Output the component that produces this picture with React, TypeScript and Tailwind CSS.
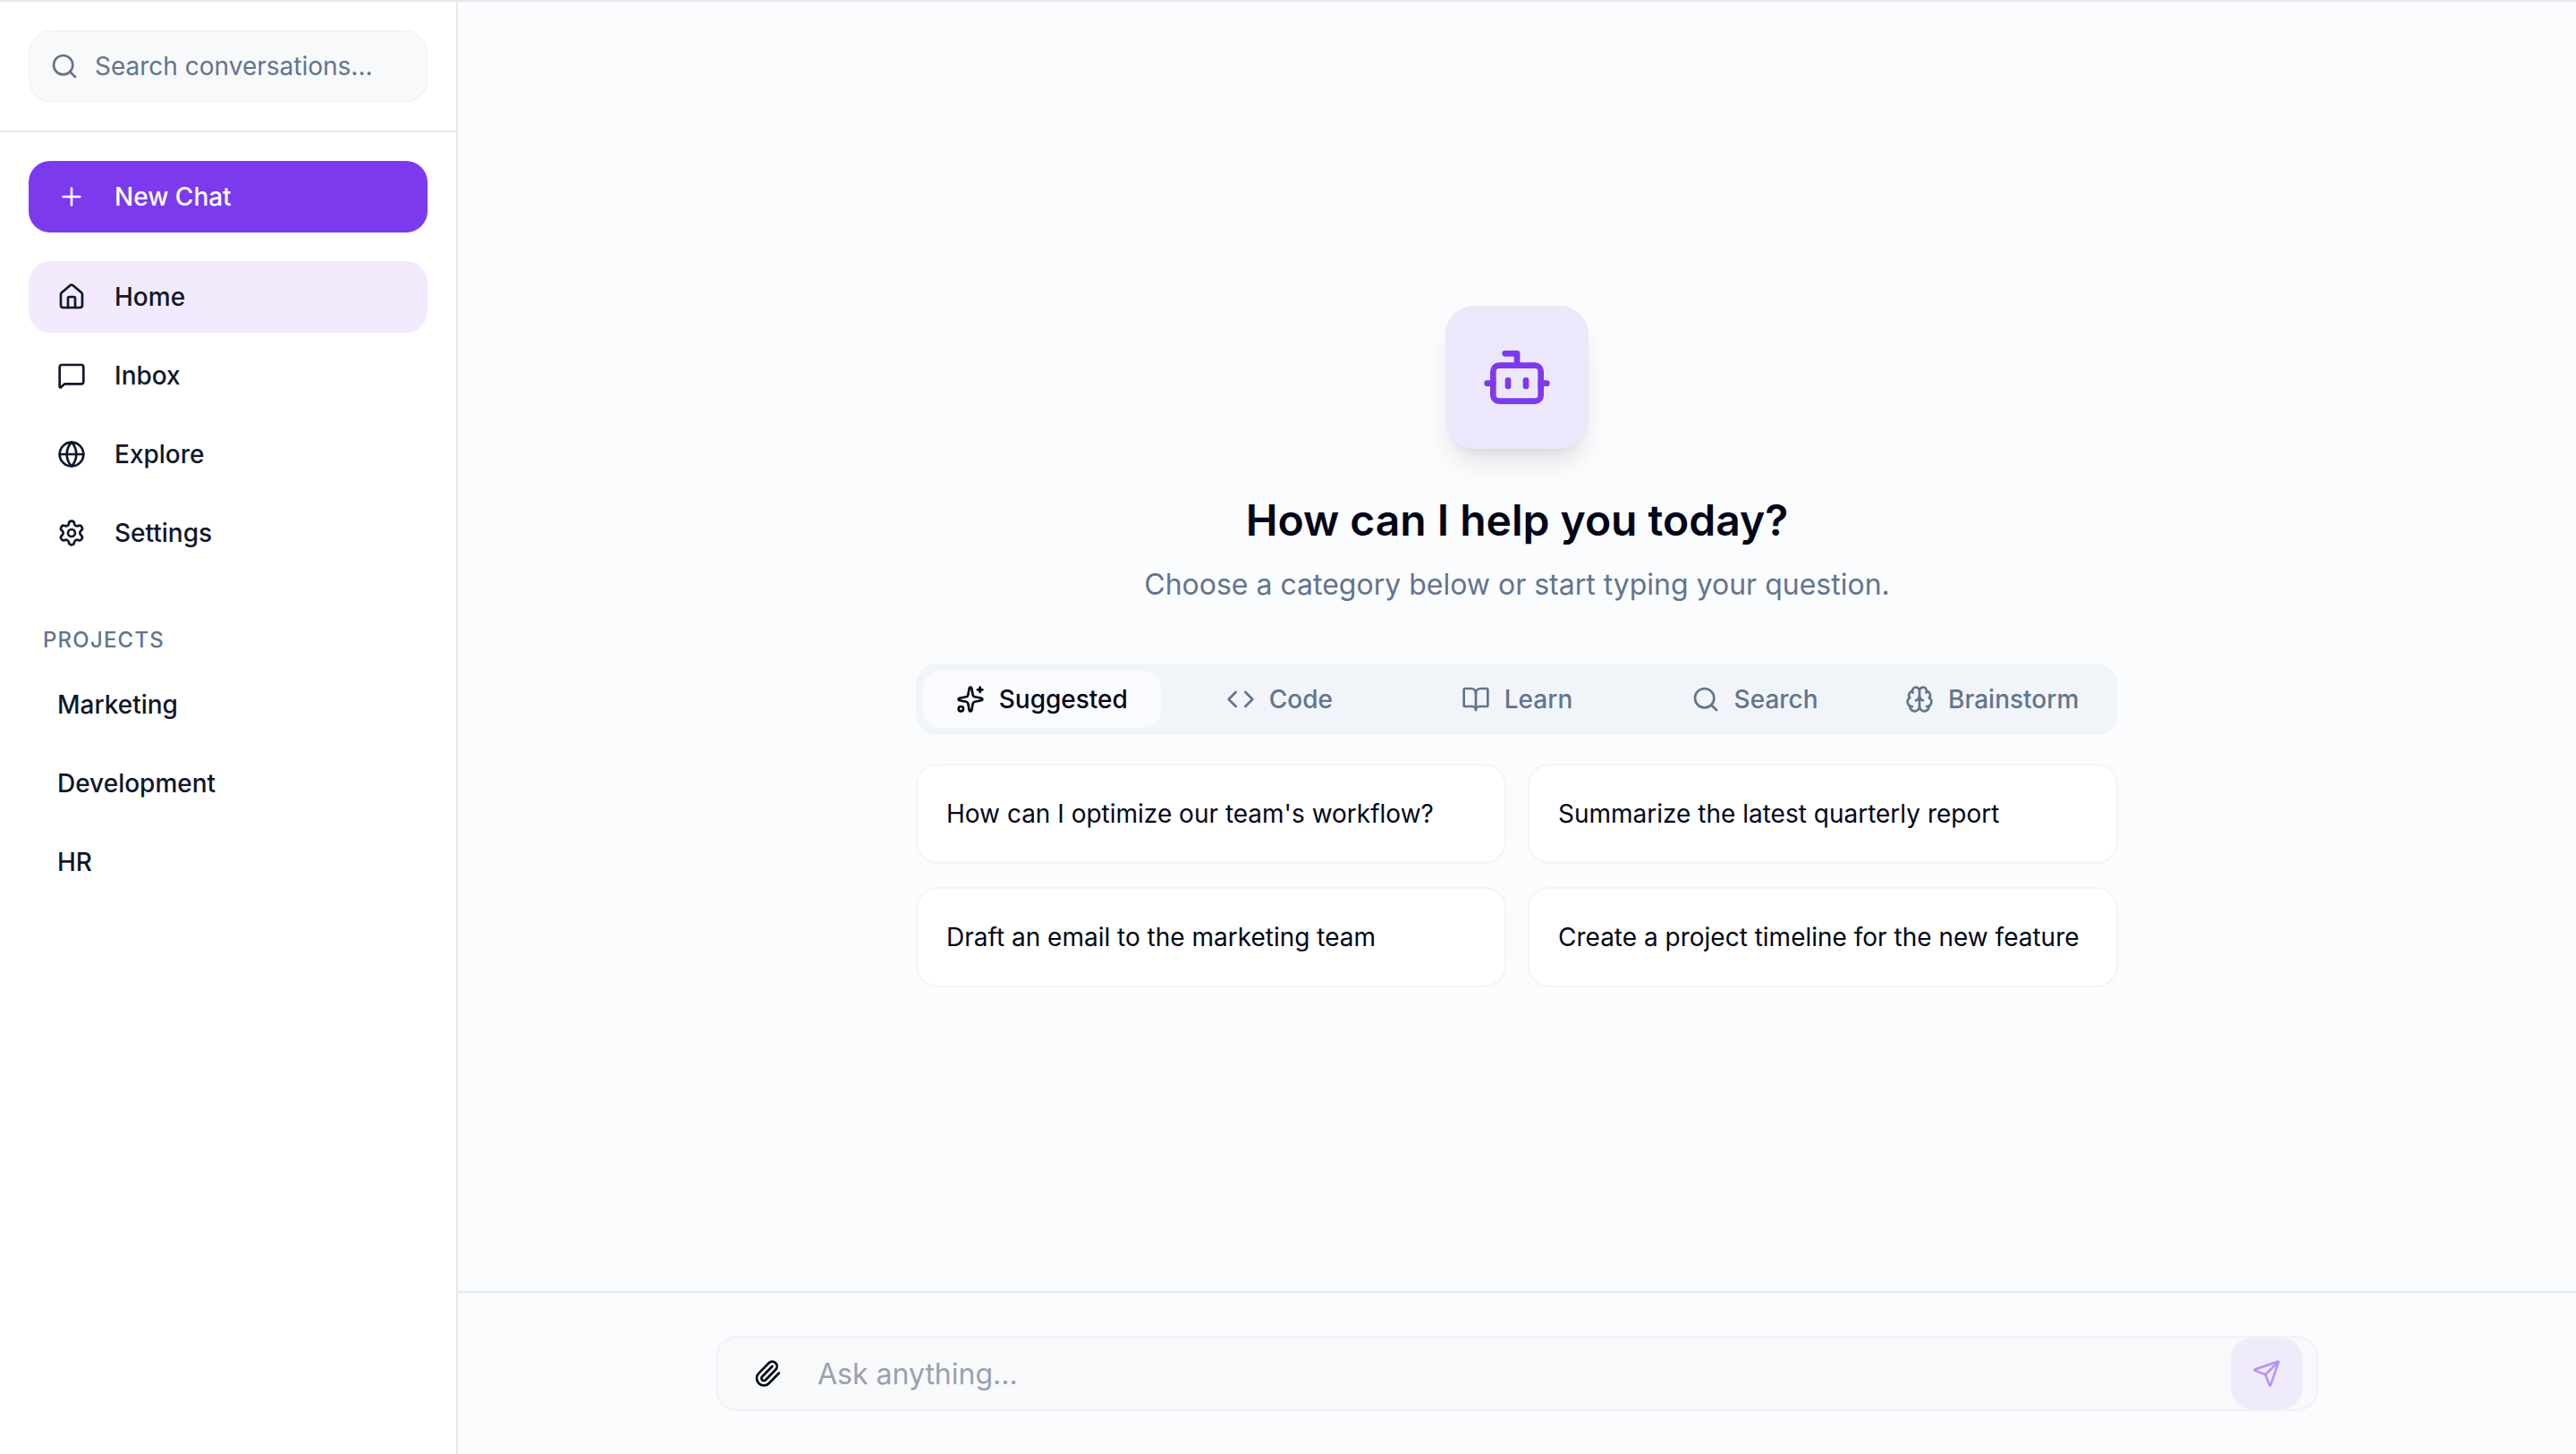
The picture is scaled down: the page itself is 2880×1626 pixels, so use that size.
import React from "react";
import {
  BookOpen,
  Bot,
  Brain,
  Code,
  Globe,
  House,
  MessageSquare,
  Paperclip,
  Plus,
  Search,
  Send,
  Settings,
  Sparkles,
} from "lucide-react";

const navItems = [
  { label: "Home", icon: House, active: true },
  { label: "Inbox", icon: MessageSquare },
  { label: "Explore", icon: Globe },
  { label: "Settings", icon: Settings },
];

const projects = ["Marketing", "Development", "HR"];

const tabs = [
  { label: "Suggested", icon: Sparkles, active: true },
  { label: "Code", icon: Code },
  { label: "Learn", icon: BookOpen },
  { label: "Search", icon: Search },
  { label: "Brainstorm", icon: Brain },
];

const prompts = [
  "How can I optimize our team's workflow?",
  "Summarize the latest quarterly report",
  "Draft an email to the marketing team",
  "Create a project timeline for the new feature",
];

const Sidebar: React.FC = () => {
  return (
    <aside className="flex w-[512px] shrink-0 flex-col border-r-2 border-slate-200 bg-white">
      <div className="border-b-2 border-slate-200 p-8">
        <div className="flex h-20 items-center gap-[18px] rounded-3xl border-2 border-slate-100 bg-[#f8f9fb] px-[22px]">
          <Search className="size-8 shrink-0 text-slate-500" />
          <input
            className="w-full bg-transparent text-[28px] text-slate-900 outline-none placeholder:text-slate-500"
            placeholder="Search conversations..."
          />
        </div>
      </div>
      <nav className="flex flex-col gap-2 p-8">
        <button className="mb-6 flex h-20 items-center gap-8 rounded-3xl bg-[#7c3aed] px-8 text-[28px] font-medium text-white">
          <Plus className="size-8" />
          New Chat
        </button>
        {navItems.map((item) => (
          <a
            key={item.label}
            href="#"
            className={`flex h-20 items-center gap-8 rounded-3xl px-8 text-[28px] font-medium text-slate-900 ${
              item.active ? "bg-[#f3eafd]" : ""
            }`}
          >
            <item.icon className="size-8" />
            {item.label}
          </a>
        ))}
        <div className="mt-14 mb-2 px-4 text-2xl leading-8 font-medium tracking-wider text-slate-500 uppercase">
          Projects
        </div>
        {projects.map((name) => (
          <a
            key={name}
            href="#"
            className="flex h-20 items-center rounded-3xl px-8 text-[28px] font-medium text-slate-900"
          >
            {name}
          </a>
        ))}
      </nav>
    </aside>
  );
};

const App: React.FC = () => {
  return (
    <div className="flex h-screen border-t-2 border-gray-200 font-['Inter',sans-serif]">
      <Sidebar />
      <main className="flex min-w-0 flex-1 flex-col bg-[#fbfcfe]">
        <div className="flex flex-1 flex-col items-center justify-center">
          <div className="flex size-40 items-center justify-center rounded-[32px] bg-[#ede7fb] shadow-[0_20px_30px_-6px_rgba(0,0,0,0.1),0_8px_12px_-8px_rgba(0,0,0,0.1)]">
            <Bot className="size-20 text-[#7c3aed]" />
          </div>
          <h1 className="mt-12 text-5xl leading-[64px] font-semibold text-slate-950">
            How can I help you today?
          </h1>
          <p className="mt-4 text-[32px] leading-12 text-slate-500">
            Choose a category below or start typing your question.
          </p>
          <div className="mt-16 w-[1344px]">
            <div className="grid h-20 grid-cols-5 rounded-3xl bg-slate-100 p-2">
              {tabs.map((tab) => (
                <button
                  key={tab.label}
                  className={`flex items-center justify-center gap-4 rounded-[20px] text-[28px] font-medium ${
                    tab.active ? "bg-[#fafbfe] text-slate-950" : "text-slate-500"
                  }`}
                >
                  <tab.icon className="size-8" />
                  {tab.label}
                </button>
              ))}
            </div>
            <div className="mt-8 grid grid-cols-2 gap-x-6 gap-y-[26px]">
              {prompts.map((text) => (
                <button
                  key={text}
                  className="flex h-28 items-center rounded-3xl border-2 border-slate-100 bg-white px-8 text-left text-[28px] text-slate-950"
                >
                  {text}
                </button>
              ))}
            </div>
          </div>
        </div>
        <footer className="border-t-2 border-slate-200 py-12">
          <div className="mx-auto flex h-[84px] w-[1792px] items-center rounded-3xl border-2 border-[#f1f2f7] bg-[#f8f9fb] pr-4 pl-10">
            <Paperclip className="size-8 shrink-0 text-slate-950" />
            <input
              className="ml-10 flex-1 bg-transparent pt-0.5 text-[32px] text-slate-900 outline-none placeholder:text-gray-400"
              placeholder="Ask anything..."
            />
            <button className="flex size-20 items-center justify-center rounded-3xl bg-[#f0ebfa]">
              <Send className="size-8 text-[#b794f4]" />
            </button>
          </div>
        </footer>
      </main>
    </div>
  );
};

export default App;
